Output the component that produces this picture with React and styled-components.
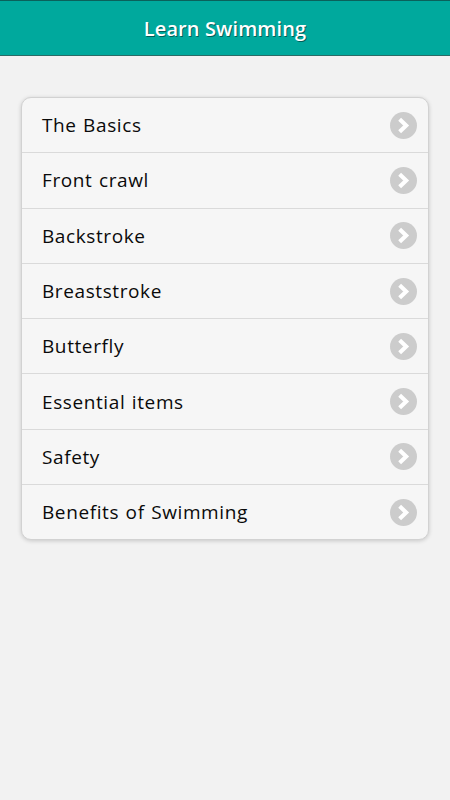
import React from "react";
import styled, { createGlobalStyle } from "styled-components";

const items = [
  "The Basics",
  "Front crawl",
  "Backstroke",
  "Breaststroke",
  "Butterfly",
  "Essential items",
  "Safety",
  "Benefits of Swimming",
];

const Global = createGlobalStyle`
  html, body {
    margin: 0;
    padding: 0;
    background: #f2f2f2;
    font-family: "Open Sans", "Noto Sans", sans-serif;
  }
`;

const Page = styled.div`
  min-height: 800px;
  background: #f2f2f2;
`;

const Header = styled.header`
  height: 54px;
  background: #00a99d;
  border-top: 1px solid #0a615b;
  border-bottom: 1px solid #2b6b66;
  display: flex;
  align-items: center;
  justify-content: center;
  color: #ffffff;
  font-size: 20px;
  font-weight: 600;
  letter-spacing: 0.1px;
  text-shadow: 1px 1px 0 rgba(0, 0, 0, 0.45);
`;

const Content = styled.main`
  padding: 41px 21px 0 21px;
`;

const List = styled.ul`
  list-style: none;
  margin: 0;
  padding: 0;
  background: #f6f6f6;
  border: 1px solid #d2d2d2;
  border-radius: 10px;
  box-shadow: 0 1px 4px rgba(0, 0, 0, 0.18);
  overflow: hidden;
`;

const Row = styled.li`
  height: 54.3px;
  display: flex;
  align-items: center;
  justify-content: space-between;
  padding: 0 11px 0 20px;
  border-top: ${(p) => (p.first ? "none" : "1px solid #dadada")};
  color: #0a0a0a;
  font-size: 19px;
  letter-spacing: 0.6px;
  word-spacing: 1px;
`;

// grey round button with a white chevron
const Chevron = () => (
  <svg width="27" height="27" viewBox="0 0 28 28">
    <circle cx="14" cy="14" r="14" fill="#cccccc" />
    <path
      d="M10 7.5 L16.8 14 L10 20.5"
      fill="none"
      stroke="#ffffff"
      strokeWidth="4.2"
      strokeLinecap="butt"
      strokeLinejoin="miter"
    />
  </svg>
);

export default function App() {
  return (
    <Page>
      <Global />
      <Header>Learn Swimming</Header>
      <Content>
        <List>
          {items.map((item, i) => (
            <Row key={item} first={i === 0}>
              {item}
              <Chevron />
            </Row>
          ))}
        </List>
      </Content>
    </Page>
  );
}
